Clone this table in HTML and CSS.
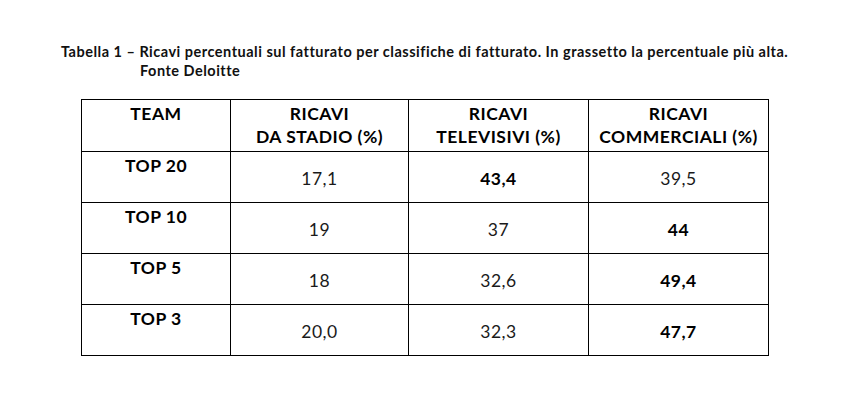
FILE: index.html
```html
<!DOCTYPE html>
<html lang="it">
<head>
<meta charset="utf-8">
<title>Tabella 1</title>
<link rel="stylesheet" href="styles.css">
</head>
<body>
<div class="page">
  <div class="caption">
    <div class="cap-line">Tabella 1 – Ricavi percentuali sul fatturato per classifiche di fatturato. In grassetto la percentuale più alta.</div>
    <div class="cap-line cap-indent">Fonte Deloitte</div>
  </div>
  <table class="data">
    <colgroup>
      <col class="c1"><col class="c2"><col class="c3"><col class="c4">
    </colgroup>
    <thead>
      <tr>
        <th>TEAM</th>
        <th>RICAVI<br>DA STADIO (%)</th>
        <th>RICAVI<br>TELEVISIVI (%)</th>
        <th>RICAVI<br>COMMERCIALI (%)</th>
      </tr>
    </thead>
    <tbody>
      <tr><th>TOP 20</th><td>17,1</td><td class="b">43,4</td><td>39,5</td></tr>
      <tr><th>TOP 10</th><td>19</td><td>37</td><td class="b">44</td></tr>
      <tr><th>TOP 5</th><td>18</td><td>32,6</td><td class="b">49,4</td></tr>
      <tr><th>TOP 3</th><td>20,0</td><td>32,3</td><td class="b">47,7</td></tr>
    </tbody>
  </table>
</div>
</body>
</html>
```
FILE: styles.css
```css
html, body {
  margin: 0;
  padding: 0;
  background: #fff;
}
body {
  font-family: Lato, "Open Sans", sans-serif;
  color: #000;
}
.page {
  padding: 42px 0 0 61px;
}
.caption {
  font-weight: 700;
  font-size: 14.5px;
  letter-spacing: 0.5px;
  line-height: 19px;
  color: #111;
}
.cap-indent {
  padding-left: 79px;
}
.data {
  margin: 19px 0 0 20px;
  border-collapse: collapse;
  table-layout: fixed;
  width: 687px;
}
.c1 { width: 149px; }
.c2 { width: 178px; }
.c3 { width: 180px; }
.c4 { width: 180px; }
.data th, .data td {
  border: 1px solid #000;
  text-align: center;
  font-size: 17.5px;
  letter-spacing: 0.5px;
  line-height: 23px;
  padding: 0;
}
.data thead th {
  vertical-align: top;
  padding-top: 2px;
  height: 49px;
  font-weight: 700;
}
.data tbody th {
  vertical-align: top;
  padding-top: 2px;
  height: 48px;
  font-weight: 700;
}
.data td {
  vertical-align: middle;
  font-weight: 400;
  padding-top: 3px;
  height: 47px;
  color: #1a1a1a;
}
.data td.b {
  font-weight: 700;
  color: #000;
}
```
